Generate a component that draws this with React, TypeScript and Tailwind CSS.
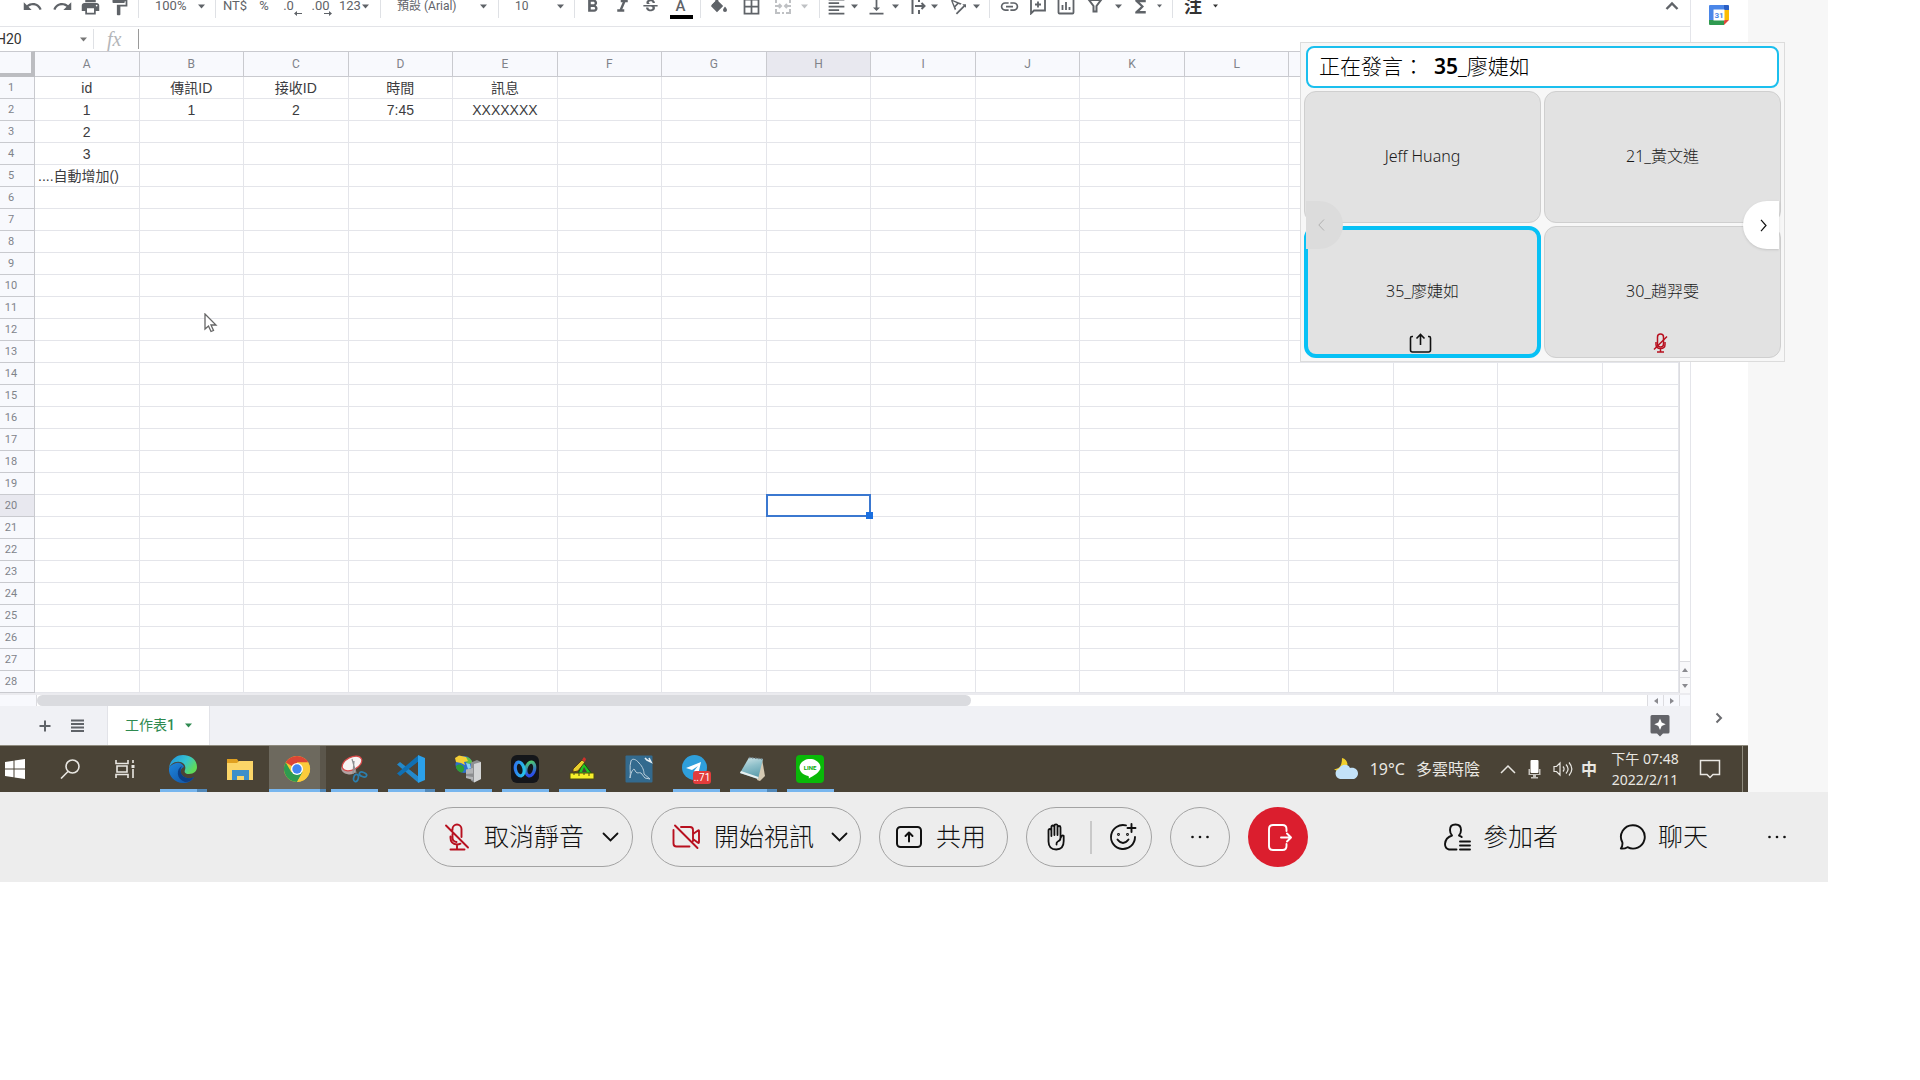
import React from "react";
import {
  MdUndo,
  MdRedo,
  MdPrint,
  MdFormatPaint,
  MdFormatBold,
  MdFormatItalic,
  MdStrikethroughS,
  MdFormatColorFill,
  MdBorderAll,
  MdFormatAlignLeft,
  MdVerticalAlignBottom,
  MdTextRotationAngleup,
  MdLink,
  MdFunctions,
} from "react-icons/md";

const uiFont = "font-['Roboto','Noto_Sans_CJK_TC',sans-serif]";
const cellFont = "font-['Liberation_Sans','Noto_Sans_CJK_TC',sans-serif]";
const meetFont = "font-['Noto_Sans','Noto_Sans_CJK_TC',sans-serif]";
const lightFont = "font-['Noto_Sans','Noto_Sans_CJK_TC_Light','Noto_Sans_CJK_TC',sans-serif] font-light";

function Caret({ className = "" }: { className?: string }) {
  return (
    <svg className={`h-[5px] w-[7px] shrink-0 ${className}`} viewBox="0 0 7 5" fill="currentColor">
      <path d="M0 0.5h7L3.5 4.5z" />
    </svg>
  );
}

function SmallCaret({ className = "" }: { className?: string }) {
  return (
    <svg className={`h-[4px] w-[5px] shrink-0 ${className}`} viewBox="0 0 5 4" fill="currentColor">
      <path d="M0 0.5h5L2.5 3.5z" />
    </svg>
  );
}

function Sep({ className }: { className: string }) {
  return <div className={`h-6 w-px shrink-0 bg-[#dfe1e5] ${className}`} />;
}

function Tool({ label, className, menu, children }: { label: string; className: string; menu?: boolean; children: React.ReactNode }) {
  return (
    <button
      type="button"
      aria-label={label}
      className={`flex h-6 shrink-0 items-center whitespace-nowrap ${menu ? "justify-between" : "justify-center"} ${className}`}
    >
      {children}
    </button>
  );
}

const g = "h-[21px] w-[21px] shrink-0";
const gMenu = "-ml-0.5 h-[21px] w-[21px] shrink-0";
const lineIcon = "h-[18px] w-[18px] shrink-0";

function Toolbar() {
  return (
    <div className="h-[27px] border-b border-[#e3e4e8] text-[13px] text-[#5f6368]">
      <div className="flex h-3 items-center pl-[23px]">
        <Tool label="復原" className="w-[18px]"><MdUndo className={g} /></Tool>
        <Tool label="重做" className="ml-3 w-[18px]"><MdRedo className={g} /></Tool>
        <Tool label="列印" className="ml-2.5 w-[18px]"><MdPrint className={g} /></Tool>
        <Tool label="複製格式" className="ml-3 w-4"><MdFormatPaint className={g} /></Tool>
        <Sep className="ml-[11px]" />
        <Tool label="縮放" menu className="ml-4 w-[50px]"><span>100%</span><Caret /></Tool>
        <Sep className="ml-2.5" />
        <Tool label="貨幣格式" className="ml-1.5 w-[26px]">NT$</Tool>
        <Tool label="百分比格式" className="ml-2.5 w-3">%</Tool>
        <Tool label="減少小數位數" className="ml-3 w-[17px]">
          <span className="relative -left-0.5">.0
            <svg className="absolute -right-2 top-[15px] h-[5px] w-[8px]" viewBox="0 0 8 5" fill="currentColor"><path d="M0 2.500 3 0v2h5v1H3v2z" /></svg>
          </span>
        </Tool>
        <Tool label="增加小數位數" className="ml-3 w-[19px]">
          <span className="relative">.00
            <svg className="absolute -right-0.5 top-[15px] h-[5px] w-[8px]" viewBox="0 0 8 5" fill="currentColor"><path d="M8 2.500 5 0v2H0v1h5v2z" /></svg>
          </span>
        </Tool>
        <Tool label="更多格式" menu className="ml-[9px] w-[30px]"><span>123</span><Caret /></Tool>
        <Sep className="ml-[11px]" />
        <Tool label="字型" menu className="ml-4 w-[90px] text-[12px]"><span>預設 (Arial)</span><Caret /></Tool>
        <Sep className="ml-[11px]" />
        <Tool label="字型大小" menu className="ml-4 w-[49px] text-[12px]"><span>10</span><Caret /></Tool>
        <Sep className="ml-2.5" />
        <Tool label="粗體" className="ml-[9px] w-4"><MdFormatBold className={g} /></Tool>
        <Tool label="斜體" className="ml-3.5 w-4"><MdFormatItalic className={g} /></Tool>
        <Tool label="刪除線" className="ml-3 w-4"><MdStrikethroughS className="h-[19px] w-[19px] shrink-0" /></Tool>
        <Tool label="文字顏色" className="ml-[11px] w-[23px]">
          <span className="relative text-[15px] font-medium">A<span className="absolute -left-1.5 top-[20px] h-1 w-[23px] bg-black" /></span>
        </Tool>
        <Sep className="ml-2" />
        <Tool label="填滿顏色" className="ml-2.5 w-4">
          <svg className={lineIcon} viewBox="0 0 18 18">
            <path d="M5 1.500 12.500 9 7.500 14 1.500 8 6.500 3" fill="currentColor" />
            <path d="M4.500 1.500 12 9 7 14 2 9l6-6" fill="none" stroke="currentColor" strokeWidth="1.600" />
            <path d="M15 9.500s2 2.300 2 3.500a2 2 0 0 1-4 0c0-1.200 2-3.500 2-3.500z" fill="currentColor" />
          </svg>
        </Tool>
        <Tool label="框線" className="ml-4 w-4"><MdBorderAll className={g} /></Tool>
        <Tool label="合併儲存格" menu className="ml-[15px] w-[34px] text-[#bfc1c4]">
          <svg className={lineIcon} viewBox="0 0 18 18" fill="none" stroke="currentColor" strokeWidth="2">
            <path d="M6 2H2v4M2 12v4h4M12 2h4v4M16 12v4h-4M8 2h2M8 16h2M1 9h5M12 9h5M5 7l2 2-2 2M13 7l-2 2 2 2" />
          </svg>
          <Caret />
        </Tool>
        <Sep className="ml-[11px]" />
        <Tool label="水平對齊" menu className="ml-2 w-[30px]"><MdFormatAlignLeft className={gMenu} /><Caret /></Tool>
        <Tool label="垂直對齊" menu className="ml-2.5 w-[31px]"><MdVerticalAlignBottom className={gMenu} /><Caret /></Tool>
        <Tool label="文字換行" menu className="ml-3 w-[27px]">
          <svg className="h-[18px] w-[15px] shrink-0" viewBox="0 0 15 18" fill="none" stroke="currentColor" strokeWidth="2">
            <path d="M1.500 1v16M8 1v4M8 13v4M4 9h9M10.500 6l3 3-3 3" />
          </svg>
          <Caret />
        </Tool>
        <Tool label="文字旋轉" menu className="ml-3 w-[30px]"><MdTextRotationAngleup className={gMenu} /><Caret /></Tool>
        <Sep className="ml-[9px]" />
        <Tool label="插入連結" className="ml-2.5 w-[18px]"><MdLink className={g} /></Tool>
        <Tool label="插入註解" className="ml-3 w-4">
          <svg className={lineIcon} viewBox="0 0 18 18" fill="none" stroke="currentColor" strokeWidth="1.800">
            <path d="M2 16.500V2h14v11.500H5zM9 4.500v6M6 7.500h6" />
          </svg>
        </Tool>
        <Tool label="插入圖表" className="ml-3 w-4">
          <svg className={lineIcon} viewBox="0 0 18 18" fill="none" stroke="currentColor" strokeWidth="1.800">
            <rect x="1.500" y="1.500" width="15" height="15" rx="1" />
            <path d="M5.500 13V8M9 13V5M12.500 13v-3" />
          </svg>
        </Tool>
        <Tool label="篩選器" menu className="ml-3 w-[36px]">
          <svg className={lineIcon} viewBox="0 0 18 18" fill="none" stroke="currentColor" strokeWidth="2">
            <path d="M3 3h12l-4.500 6v5.500h-3V9z" />
          </svg>
          <Caret />
        </Tool>
        <Tool label="函式" menu className="ml-2 w-[32px]"><MdFunctions className={g} /><SmallCaret /></Tool>
        <Sep className="ml-2.5" />
        <Tool label="輸入工具" menu className="ml-[11px] w-[34px] text-[18px] font-bold text-[#333]"><span>注</span><SmallCaret /></Tool>
        <Tool label="隱藏選單" className="mr-2.5 ml-auto w-4">
          <svg className="h-[10px] w-[14px]" viewBox="0 0 14 10" fill="none" stroke="currentColor" strokeWidth="2.400"><path d="M1.500 8 7 2.500 12.500 8" /></svg>
        </Tool>
      </div>
    </div>
  );
}

function FormulaBar() {
  return (
    <div className="flex h-6 items-center text-[#5f6368]">
      <input aria-label="名稱方塊" defaultValue="H20" className="-ml-1 w-[84px] bg-transparent text-[14px] text-[#333] outline-none" />
      <Caret className="text-[#777]" />
      <div className="ml-1.5 h-5 w-px bg-[#dfe1e5]" />
      <label htmlFor="formula" className="ml-[13px] w-[31px] font-['Liberation_Serif',serif] text-[20px] leading-5 text-[#b4b6b9] italic">fx</label>
      <div className="h-5 w-px bg-[#9a9a9a]" />
      <input id="formula" className="min-w-0 flex-1 bg-transparent px-2 text-[14px] outline-none" />
    </div>
  );
}

const columns = ["A", "B", "C", "D", "E", "F", "G", "H", "I", "J", "K", "L", "M", "N", "O", "P"];
const labelled = 12;
const rows: string[][] = [
  ["id", "傳訊ID", "接收ID", "時間", "訊息"],
  ["1", "1", "2", "7:45", "XXXXXXX"],
  ["2"],
  ["3"],
  ["....自動增加()"],
];

function Grid() {
  return (
    <table className={`w-full table-fixed border-separate border-spacing-0 ${cellFont}`}>
      <colgroup>
        <col className="w-[35px]" />
        {columns.map((c) => (
          <col key={c} className={c === "P" ? "w-[76px]" : ""} />
        ))}
      </colgroup>
      <thead>
        <tr className={`h-[26px] text-[12px] text-[#80838a] ${uiFont}`}>
          <th aria-label="全選" className="border-t border-r-4 border-b-4 border-t-[#c9cacf] border-r-[#bcbdc1] border-b-[#bcbdc1] bg-[#f8f9fd] p-0" />
          {columns.map((c, i) => (
            <th
              key={c}
              scope="col"
              aria-label={c}
              className={`border-y border-r border-[#c9cacf] p-0 font-normal ${c === "H" ? "bg-[#e8e8ef]" : "bg-[#f8f9fd]"}`}
            >
              {i < labelled ? c : null}
            </th>
          ))}
        </tr>
      </thead>
      <tbody>
        {Array.from({ length: 28 }, (_, r) => (
          <tr key={r} className="h-[22px]">
            <th
              scope="row"
              className={`border-r border-b border-[#c9cacf] p-0 pr-3 text-[11px] leading-4 font-normal text-[#80838a] ${uiFont} ${r === 19 ? "bg-[#e8e8ef]" : "bg-[#f8f9fd]"}`}
            >
              {r + 1}
            </th>
            {columns.map((c, i) => (
              <td
                key={c}
                className={`border-r border-b border-[#e4e5ea] p-0 text-[14px] leading-5 whitespace-nowrap text-[#3c3c40] ${r === 4 ? "pl-[3px] text-left" : "text-center"}`}
              >
                {r === 19 && c === "H" ? (
                  <div className="relative -m-px h-[23px] border-2 border-[#3b78d0]">
                    <span className="absolute -right-1 -bottom-1 h-[7px] w-[7px] bg-[#1a6fe0]" />
                  </div>
                ) : (
                  rows[r]?.[i]
                )}
              </td>
            ))}
          </tr>
        ))}
      </tbody>
    </table>
  );
}

function Arrow({ d }: { d: string }) {
  return (
    <svg className="h-[6px] w-[6px]" viewBox="0 0 6 6" fill="#8a8a8f"><path d={d} /></svg>
  );
}

function Sheet() {
  return (
    <div className="min-w-0 flex-1">
      <Toolbar />
      <FormulaBar />
      <div className="flex">
        <div className="min-w-0 flex-1"><Grid /></div>
        <div className="flex w-[11px] flex-col border-t border-l border-[#dcdce0]">
          <div className="flex-1 bg-white" />
          <button type="button" aria-label="向上捲動" className="flex h-4 items-center justify-center border-t border-[#dcdce0] bg-[#f8f8fa]"><Arrow d="M0 5h6L3 1z" /></button>
          <button type="button" aria-label="向下捲動" className="flex h-4 items-center justify-center border-t border-[#dcdce0] bg-[#f8f8fa]"><Arrow d="M0 1h6L3 5z" /></button>
        </div>
      </div>
      <div className="flex h-[13px] border-t-2 border-[#ebebef] bg-[#f8f9fd]">
        <div className="w-[37px] border-r border-[#dcdce0]" />
        <div className="min-w-0 flex-1 bg-white">
          <div className="h-[11px] w-[58%] rounded-full bg-[#dadbdf]" />
        </div>
        <button type="button" aria-label="向左捲動" className="flex w-4 items-center justify-center border-l border-[#dcdce0]"><Arrow d="M5 0v6L1 3z" /></button>
        <button type="button" aria-label="向右捲動" className="flex w-4 items-center justify-center border-l border-[#dcdce0]"><Arrow d="M1 0v6l4-3z" /></button>
        <div className="w-[11px] border-l border-[#dcdce0]" />
      </div>
      <div className="flex h-[39px] items-center bg-[#f0f1f5] pl-[39px] text-[#5f6368]">
        <button type="button" aria-label="新增工作表">
          <svg className="h-3 w-3" viewBox="0 0 12 12" stroke="currentColor" strokeWidth="2"><path d="M6 .5v11M.5 6h11" /></svg>
        </button>
        <button type="button" aria-label="所有工作表" className="ml-5">
          <svg className="h-[13px] w-[13px]" viewBox="0 0 13 13" stroke="currentColor" strokeWidth="2"><path d="M0 1.500h13M0 5h13M0 8.500h13M0 12h13" /></svg>
        </button>
        <button type="button" className="ml-[23px] flex h-full w-[103px] items-center justify-center gap-2.5 border-x border-[#e2e3e8] bg-white text-[14px] text-[#2f8a50]">
          <span>工作表<span className="font-medium">1</span></span>
          <Caret />
        </button>
        <button type="button" aria-label="探索" className="mr-5 ml-auto">
          <svg className="h-[23px] w-[20px]" viewBox="0 0 20 23"><path d="M2 1h16a1.500 1.500 0 0 1 1.500 1.500v15.500a1.500 1.500 0 0 1-1.500 1.500h-5l-3 3-3-3H2A1.500 1.500 0 0 1 .5 18V2.500A1.500 1.500 0 0 1 2 1z" fill="#636469" /><path d="m10 4.500 1.700 4 4 1.700-4 1.700-1.700 4-1.700-4-4-1.700 4-1.700z" fill="#fff" /></svg>
        </button>
      </div>
    </div>
  );
}

function SidePanel() {
  return (
    <aside className="flex w-[58px] flex-col items-center justify-between border-l border-[#e4e5ea] bg-white pt-[5px] pr-2 pb-5">
      <button type="button" aria-label="日曆" className="ml-1.5">
        <svg className="h-5 w-5" viewBox="0 0 20 20">
          <path d="M1 0h14v5H5v10H0V1a1 1 0 0 1 1-1z" fill="#4a86e8" />
          <path d="M15 0h4a1 1 0 0 1 1 1v4h-5z" fill="#2a5fc4" />
          <path d="M15 5h5v10h-5z" fill="#fbbc04" />
          <path d="M0 15h15v5H1a1 1 0 0 1-1-1z" fill="#2f9a50" />
          <path d="M15 15h5l-5 5z" fill="#e0483a" />
          <path d="M4.500 4.500h11v11h-11z" fill="#fff" />
          <text x="10" y="13" textAnchor="middle" fontSize="8" fontWeight="700" fontFamily="Roboto, sans-serif" fill="#4a86e8">31</text>
        </svg>
      </button>
      <button type="button" aria-label="隱藏側邊面板" className="ml-1.5">
        <svg className="h-[14px] w-[10px]" viewBox="0 0 10 14" fill="none" stroke="#6b6c70" strokeWidth="2"><path d="m2.500 2.500 4.500 4.500-4.500 4.500" /></svg>
      </button>
    </aside>
  );
}

const app = "h-7 w-7";

function EdgeIcon() {
  return (
    <svg className="h-[30px] w-[30px]" viewBox="0 0 30 30">
      <defs>
        <linearGradient id="edgeTop" x1="0" y1="0" x2="1" y2="0.500"><stop offset="0" stopColor="#1f8fe0" /><stop offset="0.600" stopColor="#35c3d0" /><stop offset="1" stopColor="#5fdc5a" /></linearGradient>
        <linearGradient id="edgeLow" x1="0" y1="0" x2="1" y2="1"><stop offset="0" stopColor="#1f86dc" /><stop offset="1" stopColor="#0f4fa0" /></linearGradient>
      </defs>
      <path d="M15 1C8 1 2 6 1 14c2-5 7-7 11-6 5 1 6 5 5 8-1 2 0 4 4 4 5 0 8-3 8-7C29 6 23 1 15 1z" fill="url(#edgeTop)" />
      <path d="M1 14c-1 8 6 15 14 15 5 0 9-2 11-6-3 2-9 2-12-2-3-3-1-7 2-8-1-3-4-5-8-4-4 1-6 3-7 5z" fill="url(#edgeLow)" />
      <path d="M14 12c-6 3-6 13 3 16 4 0 7-2 9-5-3 2-9 2-12-2-2-3-2-6 0-9z" fill="#0d3f86" />
    </svg>
  );
}
function FolderIcon() {
  return (
    <svg className={app} viewBox="0 0 28 28">
      <path d="M1 4h10l2 3h13v4H1z" fill="#e0a020" />
      <path d="M1 8h10l2-2h14v19H1z" fill="#fbd568" />
      <path d="M6 15h17v10h-5v-4h-7v4H6z" fill="#3d8fc9" />
    </svg>
  );
}
function ChromeIcon() {
  return (
    <svg className={app} viewBox="0 0 28 28">
      <circle cx="14" cy="14" r="13" fill="#f5c731" />
      <path d="M14 14 2.740 7.500A13 13 0 0 1 25.260 7.500H14z" fill="#dc4535" />
      <path d="M2.740 7.500A13 13 0 0 0 14 27l5.600-9.800L14 14l-5.600 3.200z" fill="#2e9b50" />
      <path d="M25.260 7.500H14l5.600 9.800L14 27A13 13 0 0 0 25.260 7.500z" fill="#fbcb3c" />
      <circle cx="14" cy="14" r="6" fill="#fff" />
      <circle cx="14" cy="14" r="4.700" fill="#4286f0" />
    </svg>
  );
}
function SnipIcon() {
  return (
    <svg className={app} viewBox="0 0 28 28">
      <ellipse cx="8.500" cy="14.500" rx="7.500" ry="5" fill="#b3a3a3" transform="rotate(10 9 15)" />
      <ellipse cx="12" cy="8.500" rx="10.500" ry="6.300" fill="#f7f3f3" stroke="#d84a4a" strokeWidth="1.200" transform="rotate(-27 12 8.500)" />
      <path d="m12 4 4 14M14 6l-1 13" stroke="#8d8f92" strokeWidth="1.200" />
      <ellipse cx="16" cy="23" rx="2.300" ry="3.700" fill="none" stroke="#2c7fae" strokeWidth="1.700" transform="rotate(14 16 23)" />
      <ellipse cx="23" cy="19.500" rx="3.800" ry="2.200" fill="none" stroke="#2c7fae" strokeWidth="1.700" transform="rotate(20 23 19.500)" />
    </svg>
  );
}
function CodeIcon() {
  return (
    <svg className="h-[30px] w-[30px]" viewBox="0 0 30 30">
      <path d="m1 10.500 3-2.500 18 14v6.500z" fill="#2489ca" />
      <path d="M1 19.500 4 22 22 8V1.500z" fill="#1070b3" />
      <path d="m22 1 7 3v22l-7 3z" fill="#2ba0ea" />
      <path d="M22 8v14l-9-7z" fill="#4a4336" />
    </svg>
  );
}
function ServerIcon() {
  return (
    <svg className={app} viewBox="0 0 28 28">
      <circle cx="10" cy="9.500" r="8.500" fill="#2f6fca" />
      <path d="M2 11c2-2 5-2 7 0s1 5-1 6.500C4 17 2 14 2 11z" fill="#2f9e36" />
      <path d="M12 2c3 0 6 3 6.500 6L14 9l-3-3z" fill="#5fc04a" />
      <path d="M1 3 5 .5 12 2l2 4-4 1 1 3-4-2-5-1z" fill="#f5cf35" />
      <path d="m12 8 4 1 1 4-3 1z" fill="#8fd0f0" />
      <path d="M17 7.500 23 5l4 2v17l-7 3.500-3-2z" fill="#8d8f91" />
      <path d="m20 9 7-2v17l-7 3.500z" fill="#d3d5d6" />
      <path d="M12 14.500 19 13v12l-7-2z" fill="#b3b5b7" />
      <path d="m12 19 7-.5V22l-7-1z" fill="#8b8d8f" />
    </svg>
  );
}
function MeetIcon() {
  return (
    <svg className={app} viewBox="0 0 28 28">
      <defs>
        <linearGradient id="ringLeft" x1="0" y1="0" x2="1" y2="0.600"><stop offset="0" stopColor="#2f6ff0" /><stop offset="1" stopColor="#27c3ea" /></linearGradient>
        <linearGradient id="ringRight" x1="0" y1="0" x2="0.300" y2="1"><stop offset="0" stopColor="#4fd06a" /><stop offset="1" stopColor="#2a4fe8" /></linearGradient>
      </defs>
      <rect width="28" height="28" rx="6" fill="#14161a" />
      <ellipse cx="19.300" cy="14" rx="4.300" ry="7" fill="none" stroke="url(#ringRight)" strokeWidth="3.200" transform="rotate(12 19.300 14)" />
      <ellipse cx="8.700" cy="14" rx="4.300" ry="7" fill="none" stroke="url(#ringLeft)" strokeWidth="3.200" transform="rotate(-12 8.700 14)" />
    </svg>
  );
}
function RulerIcon() {
  return (
    <svg className={app} viewBox="0 0 28 28">
      <path d="M15 7l9 12H10z" fill="#1fc422" stroke="#0a5c0c" />
      <path d="M16 12l3 5h-5z" fill="#4a4336" />
      <path d="M5 14 14 5l3 2-7 9-5 1z" fill="#e8cf2d" stroke="#5a3d16" />
      <path d="m14 5 2-3 2 2-1 3z" fill="#d0302a" />
      <path d="M2 18h24v6H2z" fill="#f7f02a" stroke="#4c4a12" />
      <path d="M6 18v2M11 18v3M16 18v2M21 18v3" stroke="#4c4a12" />
    </svg>
  );
}
function DolphinIcon() {
  return (
    <svg className={app} viewBox="0 0 28 28">
      <rect x="0.500" y="0.500" width="27" height="27" rx="1" fill="#336a8e" />
      <path d="M5 23C6 17 4 12 6 6c1-3 5-2 8 2 4 4 5 8 5 11l6 5-5-1-4-5c-2-1-4 1-5-1l-2-3c-2 1-3 4-4 9z" fill="none" stroke="#b9cedb" strokeWidth="1" />
      <path d="m20 3 2 2 4 2-2-4" fill="none" stroke="#e6eef3" strokeWidth="1.600" />
    </svg>
  );
}
function PlaneIcon() {
  return (
    <svg className="h-[30px] w-[30px]" viewBox="0 0 30 30">
      <circle cx="13.500" cy="13.500" r="12.500" fill="#2f9fdb" />
      <path d="m5 14 15-6-3 13-4-4 4-5-6 4z" fill="#fff" />
      <rect x="12" y="17" width="18" height="13" rx="3" fill="#e23c3c" />
      <text x="21" y="27" textAnchor="middle" fontSize="10" fontFamily="Roboto, sans-serif" fill="#fff">..71</text>
    </svg>
  );
}
function NotepadIcon() {
  return (
    <svg className={app} viewBox="0 0 28 28">
      <defs>
        <linearGradient id="padFace" x1="0" y1="0" x2="0.300" y2="1"><stop offset="0" stopColor="#d6e8ea" /><stop offset="0.500" stopColor="#8fc0ca" /><stop offset="1" stopColor="#5f9fae" /></linearGradient>
      </defs>
      <path d="m23 4 3 17-5 5-3-1z" fill="#d5c9b2" />
      <path d="M10 2.500 24 4l-5 20L1 18z" fill="url(#padFace)" />
      <path d="m1 18 18 6 .5-2L2 16z" fill="#e8f0f0" />
      <path d="m10 2.500 14 1.500" stroke="#6c7a80" strokeWidth="1.500" strokeDasharray="1.500 1.500" />
    </svg>
  );
}
function LineIcon() {
  return (
    <svg className={app} viewBox="0 0 28 28">
      <rect width="28" height="28" rx="4" fill="#09b908" />
      <path d="M14 4C8 4 3.500 8 3.500 12.600c0 4.200 3.700 7.600 8.700 8.300 1 .3.600 1.400.6 2.600 4-2 11.700-6.300 11.700-10.900C24.500 8 20 4 14 4z" fill="#fff" />
      <text x="14" y="15" textAnchor="middle" fontSize="6" fontWeight="700" fontFamily="Roboto, sans-serif" fill="#09a908">LINE</text>
    </svg>
  );
}

type AppItem = { name: string; icon: React.ReactNode; mark: "none" | "one" | "many" | "active" };
const apps: AppItem[] = [
  { name: "Edge", icon: <EdgeIcon />, mark: "many" },
  { name: "檔案總管", icon: <FolderIcon />, mark: "none" },
  { name: "Chrome", icon: <ChromeIcon />, mark: "active" },
  { name: "剪取工具", icon: <SnipIcon />, mark: "one" },
  { name: "VS Code", icon: <CodeIcon />, mark: "many" },
  { name: "伺服器", icon: <ServerIcon />, mark: "one" },
  { name: "Webex", icon: <MeetIcon />, mark: "one" },
  { name: "量尺", icon: <RulerIcon />, mark: "one" },
  { name: "MySQL Workbench", icon: <DolphinIcon />, mark: "none" },
  { name: "Telegram", icon: <PlaneIcon />, mark: "one" },
  { name: "記事本", icon: <NotepadIcon />, mark: "many" },
  { name: "LINE", icon: <LineIcon />, mark: "one" },
];

function Taskbar() {
  return (
    <div className={`flex h-[47px] border-t border-[#8f8b7e] bg-[#4a4336] text-[#e9e7e2] ${meetFont}`}>
      <button type="button" aria-label="開始" className="flex w-[42px] items-center pl-[5px]">
        <svg className="h-5 w-5" viewBox="0 0 20 20" fill="#fff"><path d="M0 3l8.500-1.200v7.700H0zM9.500 1.600 20 0v9.500H9.500zM0 10.500h8.500v7.700L0 17zM9.500 10.500H20V20L9.500 18.400z" /></svg>
      </button>
      <button type="button" aria-label="搜尋" className="flex w-14 items-center justify-center">
        <svg className="h-5 w-5" viewBox="0 0 20 20" fill="none" stroke="currentColor" strokeWidth="1.600"><circle cx="12.500" cy="7.500" r="6.500" /><path d="m8 12.500-7 7" /></svg>
      </button>
      <button type="button" aria-label="工作檢視" className="flex w-[57px] items-center pl-[17px]">
        <svg className="h-5 w-5" viewBox="0 0 20 20" fill="none" stroke="currentColor" strokeWidth="1.600"><path d="M1 1v3.500h12V1M1 19v-3.500h12V19M2 7h10v6H2zM18 1v3M18 10v9" /><path d="M16.500 6h3v3h-3z" fill="currentColor" stroke="none" /></svg>
      </button>
      {apps.map((a) => (
        <button
          key={a.name}
          type="button"
          aria-label={a.name}
          className={`flex w-[57px] flex-col justify-between ${a.mark === "active" ? "bg-gradient-to-r from-[#6d695e] from-90% to-[#5b564b] to-90%" : ""}`}
        >
          <span className={`flex flex-1 items-center pt-[3px] ${a.mark === "active" ? "pl-3.5" : "justify-center pr-0.5"}`}>{a.icon}</span>
          <span className={`flex h-[3px] self-stretch ${a.mark === "active" ? "" : "mx-[5px]"}`}>
            {a.mark !== "none" && <span className="flex-1 bg-[#78b6ee]" />}
            {(a.mark === "many" || a.mark === "active") && <span className={`bg-[#5288b8] ${a.mark === "many" ? "w-2.5" : "w-1.5"}`} />}
          </span>
        </button>
      ))}
      <div className="ml-auto flex items-center">
        <svg className="h-6 w-[26px]" viewBox="0 0 26 24">
          <path d="M9 1c5 1 7 6 4 11-3 4-9 3-12 0 6 0 8-4 8-11z" fill="#f1cf2b" />
          <path d="M7 22a5.500 5.500 0 0 1-1-10.500C8 7 15 6 17 11c5-1 8 2 8 5.500S22 22 20 22z" fill="#c3e2f8" />
        </svg>
        <span className="ml-[11px] text-[16px]">19°C</span>
        <span className="ml-[11px] text-[16px]">多雲時陰</span>
        <svg className="ml-5 h-2.5 w-4" viewBox="0 0 16 10" fill="none" stroke="currentColor" strokeWidth="1.500"><path d="m1 9 7-7 7 7" /></svg>
        <svg className="ml-3 h-[19px] w-[13px]" viewBox="0 0 13 19" fill="#fff"><rect x="2.500" width="8" height="13" rx="1" /><path d="M.5 9h1.500v5h9V9h1.500v6H8v2h2v1.500H3V17h2v-2H.5z" fill="#c5c2bc" /></svg>
        <svg className="ml-3 h-4 w-5" viewBox="0 0 20 16" fill="none" stroke="currentColor" strokeWidth="1.200"><path d="M1 5.500h2.500L7 2v12l-3.500-3.500H1zM10 5.500c1.300 1.500 1.300 3.500 0 5M13 3.500c2.500 2.700 2.500 6.300 0 9M16 1.500c3.500 4 3.500 9 0 13" /></svg>
        <span className="ml-2 text-[16px] font-bold">中</span>
        <div className="ml-3 w-[72px] text-center text-[14px] leading-[21px] whitespace-nowrap">
          <div>下午 07:48</div>
          <div>2022/2/11</div>
        </div>
        <svg className="ml-[18px] h-5 w-[22px]" viewBox="0 0 22 20" fill="none" stroke="currentColor" strokeWidth="1.500"><path d="M1.500 1.500h19v14h-6.500l-3 3-3-3H1.500z" /></svg>
        <div className="ml-[21px] h-[46px] w-1.5 border-l border-[#8f8b7e]" />
      </div>
    </div>
  );
}

function ShareIcon({ className }: { className: string }) {
  return (
    <svg className={className} viewBox="0 0 26 22" fill="none" stroke="#111" strokeWidth="2" strokeLinecap="round" strokeLinejoin="round">
      <rect x="1" y="1" width="24" height="20" rx="3.500" />
      <path d="M13 15.500V7M9.500 10 13 6.500l3.500 3.500" />
    </svg>
  );
}

function Tile({ name, active, children }: { name: string; active?: boolean; children?: React.ReactNode }) {
  return (
    <div className={`relative flex h-[132px] items-center justify-center rounded-[12px] bg-[#e2e2e2] pb-0.5 ${active ? "border-4 border-[#07c1f5]" : "border border-[#cfcfcf]"}`}>
      {name}
      {children}
    </div>
  );
}

function VideoStrip() {
  return (
    <section className={`absolute top-[42px] right-[43px] w-[485px] border border-[#dcdcdc] bg-[#f7f7f7] p-[3px] text-[#1a1a1a] ${lightFont}`}>
      <div className="mx-0.5 flex h-[42px] items-center rounded-[8px] border-2 border-[#1bbfee] bg-white pl-[11px] text-[21px] text-black">
        正在發言：<span className="ml-2.5"><b className="font-semibold">35</b>_廖婕如</span>
      </div>
      <div className="relative mt-[3px] grid grid-cols-2 gap-[3px] text-[16px]">
        <Tile name="Jeff Huang" />
        <Tile name="21_黃文進" />
        <Tile name="35_廖婕如" active>
          <svg className="absolute bottom-px left-[101px] h-[20px] w-[23px]" viewBox="0 0 23 20" fill="none" stroke="#111" strokeWidth="1.600"><path d="M4 3.500H3Q1.500 3.500 1.500 5v12q0 2 2 2h16q2 0 2-2V5q0-1.500-1.500-1.500h-1M11.500 12V1.500M7.500 5.500l4-4 4 4" /></svg>
        </Tile>
        <Tile name="30_趙羿雯">
          <svg className="absolute bottom-1 left-[108px] h-[20px] w-[15px]" viewBox="0 0 15 20" fill="none" stroke="#b8101f" strokeWidth="1.500"><rect x="4.500" y="1" width="6" height="13" rx="3" /><path d="M3 9v2.500q0 4 4.500 4t4.500-4V9M7.500 15.500V19M4 19h7M1 16.500 14 3.500" /></svg>
        </Tile>
        <button type="button" aria-label="上一頁" className="absolute top-[110px] left-0.5 flex h-12 w-[37px] items-center justify-center rounded-r-full bg-[#dcdcdc] pr-1.5">
          <svg className="h-3 w-[7px]" viewBox="0 0 7 12" fill="none" stroke="#b0b0b0"><path d="M6 .5.8 6 6 11.500" /></svg>
        </button>
        <button type="button" aria-label="下一頁" className="absolute top-[110px] right-0.5 flex h-12 w-9 items-center justify-center rounded-l-full bg-white pl-1 shadow-sm">
          <svg className="h-[13px] w-[7px]" viewBox="0 0 7 13" fill="none" stroke="#111" strokeWidth="1.200"><path d="m1 .8 5 5.700-5 5.700" /></svg>
        </button>
      </div>
    </section>
  );
}

const pill = "flex h-[60px] shrink-0 items-center rounded-full border border-[#a3a3a3]";

function Dots() {
  return (
    <svg className="h-1 w-[18px]" viewBox="0 0 18 4" fill="#111"><circle cx="1.500" cy="2" r="1.300" /><circle cx="9" cy="2" r="1.300" /><circle cx="16.500" cy="2" r="1.300" /></svg>
  );
}

function Down() {
  return (
    <svg className="h-[10px] w-[17px]" viewBox="0 0 17 10" fill="none" stroke="#111" strokeWidth="1.800" strokeLinecap="round"><path d="m1.500 1.500 7 7 7-7" /></svg>
  );
}

function MeetingBar() {
  return (
    <footer className={`flex h-[90px] items-center bg-[#ededed] text-[25px] whitespace-nowrap text-[#111] ${lightFont}`}>
      <div className="flex-[423]" />
      <div className="flex gap-[18px]">
        <div className={`${pill} w-[210px] pl-5`}>
          <button type="button" className="flex items-center gap-[14px]">
            <svg className="h-[28px] w-[26px]" viewBox="0 0 26 28" fill="none" stroke="#b8101f" strokeWidth="1.900" strokeLinecap="round">
              <path d="M8.500 7V6a4.500 4.500 0 0 1 9 0v8M8.500 11v3.500q0 4 4 4.500M6.500 13.500V15q0 6 6.500 6.500 2 0 3.500-.8M13 21.500V26M6.500 26.500h14M2 2.500l22 22" />
            </svg>
            取消靜音
          </button>
          <button type="button" aria-label="音訊選項" className="ml-[18px]"><Down /></button>
        </div>
        <div className={`${pill} w-[210px] pl-5`}>
          <button type="button" className="flex items-center gap-[14px]">
            <svg className="h-[26px] w-[28px]" viewBox="0 0 28 26" fill="none" stroke="#b8101f" strokeWidth="1.900" strokeLinecap="round" strokeLinejoin="round">
              <path d="M9 3h9q3 0 3 3v11M1.500 6v13.500q0 3 3 3h13M21 10l5-3.500q1-.6 1 .6v11q0 1.300-1 .6L21 15M3 1.500 25.500 24" />
            </svg>
            開始視訊
          </button>
          <button type="button" aria-label="視訊選項" className="ml-[17px]"><Down /></button>
        </div>
        <button type="button" className={`${pill} w-[129px] gap-[14px] pl-4`}>
          <ShareIcon className="h-[22px] w-[26px]" />
          共用
        </button>
        <div className={`${pill} w-[126px] justify-between pr-[14px] pl-5`}>
          <button type="button" aria-label="舉手">
            <svg className="h-[28px] w-[18px]" viewBox="0 0 18 28" fill="none" stroke="#111" strokeWidth="1.800" strokeLinecap="round" strokeLinejoin="round">
              <path d="M1.500 17V7.500q0-1.500 1.400-1.500T4.400 7.500V13M4.400 12V4q0-1.500 1.500-1.500T7.400 4v8M7.400 11V3Q7.400 1.300 9 1.300T10.500 3v9M10.500 11V4.500Q10.500 3 12 3t1.500 1.500V15l1.300-2.200q1-1 1.900 0v5.200q0 8.500-7.500 8.500T1.500 18.500V16M13.500 15q0 2.500-2.700 3.500-1.500.8-1.300 3" />
            </svg>
          </button>
          <div className="ml-2 h-[33px] w-0.5 bg-[#c9c9c9]" />
          <button type="button" aria-label="反應">
            <svg className="h-[28px] w-[28px]" viewBox="0 0 28 28" fill="none" stroke="#111" strokeWidth="1.900" strokeLinecap="round">
              <path d="M17 2.400A12 12 0 1 0 26 14M8.500 16.500q5.500 7 11 0M22.500 1v8M18.500 5h8" />
              <circle cx="9.500" cy="11.500" r="0.500" /><circle cx="18.500" cy="11.500" r="0.500" />
            </svg>
          </button>
        </div>
        <button type="button" aria-label="更多選項" className={`${pill} w-[60px] justify-center`}><Dots /></button>
        <button type="button" aria-label="離開會議" className="flex h-[60px] w-[60px] items-center justify-center rounded-full bg-[#db1e2e]">
          <svg className="ml-1 h-[27px] w-6" viewBox="0 0 24 27" fill="none" stroke="#fff" strokeWidth="1.900" strokeLinecap="round" strokeLinejoin="round">
            <path d="M18.500 7V5q0-4-4-4H5Q1 1 1 5v17q0 4 4 4h9.500q4 0 4-4v-2M13 13.500h9.500M19 9.500l4 4-4 4" />
          </svg>
        </button>
      </div>
      <div className="flex-[136]" />
      <button type="button" className="flex items-center gap-3">
        <svg className="h-[28px] w-[27px]" viewBox="0 0 27 28" fill="none" stroke="#111" strokeWidth="1.900" strokeLinecap="round">
          <path d="M8 12.500q-2-2-2-5.500 0-5.500 5.500-5.500T17 7q0 3.500-2 5.500M8 12.500q-6.500 2-7 8.500 0 4.500 4 5.500h7.500M15 12.500q1.500.4 2.700 1.500M16 18.500h10M16 22.500h10M16 26.500h10" />
        </svg>
        參加者
      </button>
      <button type="button" className="ml-[61px] flex items-center gap-3">
        <svg className="h-[26px] w-[27px]" viewBox="0 0 27 26" fill="none" stroke="#111" strokeWidth="1.900" strokeLinejoin="round">
          <path d="M14 1.200a11.700 11.700 0 1 1-5.500 22Q5.500 25 1.800 24.500q2-2.500 1.600-6A11.700 11.700 0 0 1 14 1.200z" />
        </svg>
        聊天
      </button>
      <button type="button" aria-label="更多面板選項" className="mr-[42px] ml-[60px] flex items-center"><Dots /></button>
    </footer>
  );
}

export default function App() {
  return (
    <div className="min-h-screen bg-white pr-[92px]">
      <main className="relative overflow-hidden bg-[#f7f7f7] pr-20">
        <div className={`bg-white ${uiFont}`}>
          <div className="flex">
            <Sheet />
            <SidePanel />
          </div>
          <Taskbar />
        </div>
        <svg className="absolute top-[313px] left-[204px] h-[20px] w-[14px]" viewBox="0 0 14 20" fill="#fff" stroke="#666" strokeWidth="1.300">
          <path d="M1 1v15l3.500-3 2.500 5.500 2.500-1L7 12h5z" />
        </svg>
        <VideoStrip />
      </main>
      <MeetingBar />
    </div>
  );
}
